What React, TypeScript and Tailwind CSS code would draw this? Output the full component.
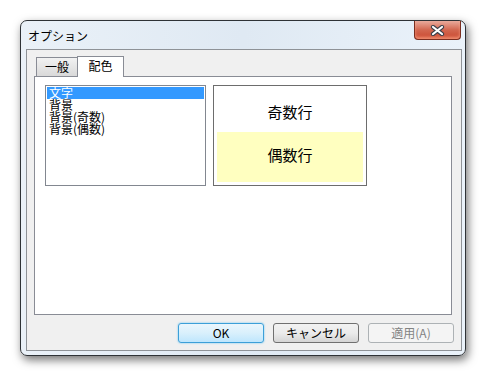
import React from "react";

const jp = { fontFamily: '"Noto Sans CJK JP", "Noto Sans", sans-serif' };

function CloseGlyph() {
  return (
    <svg width="15" height="11" viewBox="0 0 15 11">
      <path d="M3 2 L12 9 M12 2 L3 9" stroke="#3a3f4a" strokeWidth="4.2" strokeLinecap="round" />
      <path d="M3 2 L12 9 M12 2 L3 9" stroke="#ffffff" strokeWidth="2.2" strokeLinecap="round" />
    </svg>
  );
}

export default function App() {
  return (
    <div className="w-[490px] h-[380px] bg-white pt-[20px] pl-[20px]" style={jp}>
      <div className="w-[446px] h-[336px] rounded-[7px] border border-[#2e3236] bg-gradient-to-r from-[#eaf1f8] via-[#dfe9f3] to-[#eaf2fa] shadow-[2px_4px_10px_rgba(0,0,0,0.55)] flex flex-col">
        <div className="h-[28px] flex items-start pl-[7px] pr-[4px]">
          <span className="self-center mt-[2px] text-[12px] leading-[14px] text-black">オプション</span>
          <div className="ml-auto w-[47px] h-[19px] rounded-b-[4px] border border-t-0 border-[#7a2e20] bg-gradient-to-b from-[#e9aa9c] via-[#d2664f] to-[#c8452c] flex items-center justify-center shadow-[inset_0_-2px_3px_rgba(255,170,140,0.7)]">
            <CloseGlyph />
          </div>
        </div>
        <div className="ml-[5px] w-[436px] h-[302px] border border-[#8e9297] bg-[#f0f0f0] flex flex-col">
          <div className="pl-[7px] pt-[6px] flex flex-col">
            <div className="flex items-end h-[20px] relative z-10">
              <div className="ml-[2px] w-[42px] h-[19px] border border-b-0 border-[#898c95] bg-gradient-to-b from-[#f2f2f2] to-[#d9d9d9] text-[12px] leading-[18px] text-center text-black">
                一般
              </div>
              <div className="-ml-[1px] w-[47px] h-[21px] border border-b-0 border-[#898c95] bg-white text-[12px] leading-[18px] text-center text-black -mb-[1px]">
                配色
              </div>
            </div>
            <div className="w-[418px] h-[239px] border border-[#898c95] bg-white pl-[10px] pt-[8px] flex gap-[7px]">
              <div className="w-[161px] h-[101px] border border-[#828790] bg-white p-[1px]">
                <div className="h-[12px] bg-[#3399ff] text-white text-[12px] leading-[12px] pl-[2px]">文字</div>
                <div className="h-[12px] text-black text-[12px] leading-[12px] pl-[2px]">背景</div>
                <div className="h-[12px] text-black text-[12px] leading-[12px] pl-[2px]">背景(奇数)</div>
                <div className="h-[12px] text-black text-[12px] leading-[12px] pl-[2px]">背景(偶数)</div>
              </div>
              <div className="w-[154px] h-[101px] border border-[#6d6d6d] bg-white p-[3px] flex flex-col">
                <div className="h-[44px] flex items-center justify-center pt-[4px] text-[15px] text-black">奇数行</div>
                <div className="h-[51px] bg-[#ffffc0] flex items-center justify-center pb-[3px] text-[15px] text-black">偶数行</div>
              </div>
            </div>
          </div>
          <div className="flex justify-end gap-[9px] pr-[7px] pt-[8px]">
            <div className="w-[86px] h-[20px] rounded-[3px] border border-[#3c9fd8] bg-gradient-to-b from-[#eaf6fd] via-[#d9f0fc] to-[#bee6fd] shadow-[0_0_2px_#5fc1f3] flex items-center justify-center text-[12px] text-black">
              OK
            </div>
            <div className="w-[86px] h-[20px] rounded-[3px] border border-[#707070] bg-gradient-to-b from-[#f2f2f2] via-[#ebebeb] to-[#d5d5d5] flex items-center justify-center text-[12px] text-black">
              キャンセル
            </div>
            <div className="w-[86px] h-[20px] rounded-[3px] border border-[#adb2b5] bg-[#f4f4f4] flex items-center justify-center text-[12px] text-[#838383]">
              適用(A)
            </div>
          </div>
        </div>
      </div>
    </div>
  );
}
